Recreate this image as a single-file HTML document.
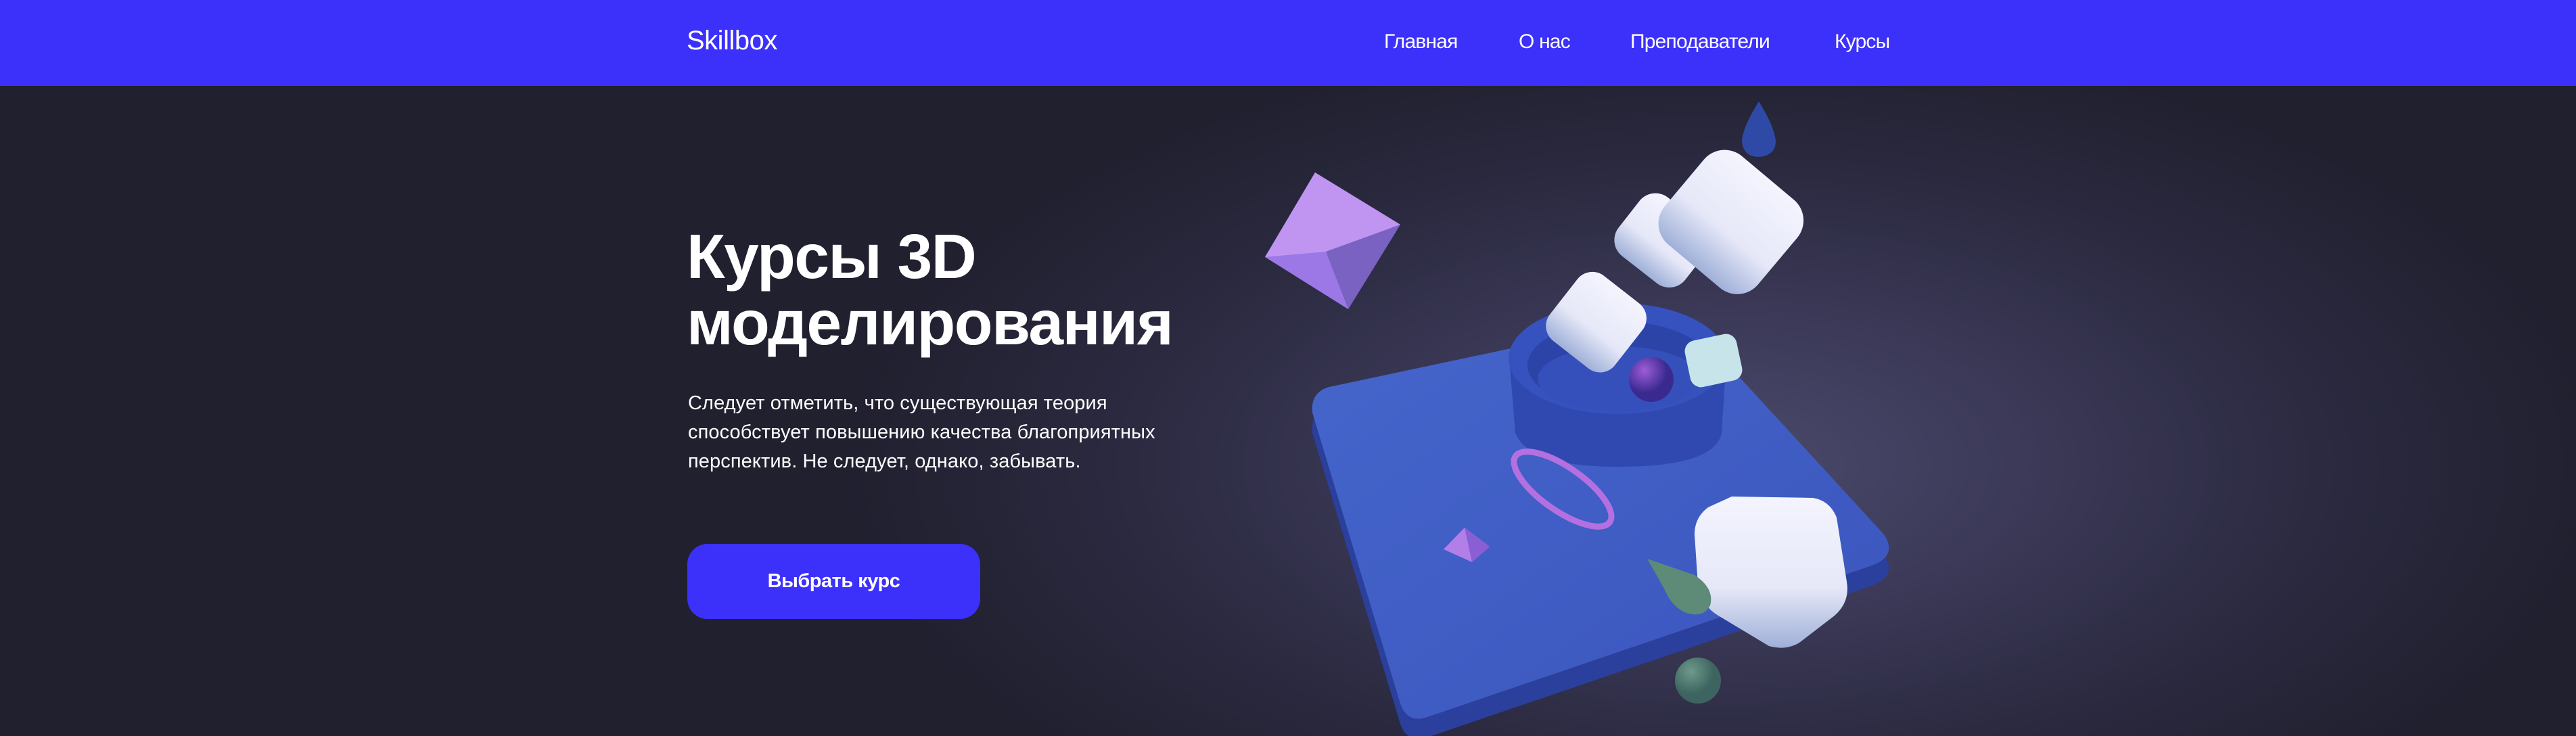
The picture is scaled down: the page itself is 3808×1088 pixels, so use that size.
<!DOCTYPE html>
<html><head><meta charset="utf-8"><style>
*{margin:0;padding:0;box-sizing:border-box}
body{width:3808px;height:1088px;overflow:hidden;background:#21202f;font-family:"Liberation Sans",Arial,sans-serif;position:relative}
.hdr{position:absolute;left:0;top:0;width:3808px;height:127px;background:#3c30fb}
.logo{position:absolute;left:1015px;top:38px;font-size:40px;color:#fff;font-weight:normal;letter-spacing:-0.5px}
.nav a{position:absolute;top:45px;font-size:30px;color:#fff;text-decoration:none;letter-spacing:-0.8px}
.bg{position:absolute;left:0;top:127px;width:3808px;height:961px;background:radial-gradient(ellipse 1300px 640px at 2550px 560px,#4c4a6c 0%,#3b3957 35%,#2a293f 70%,#21202f 100%)}
h1{position:absolute;left:1015px;top:330px;font-size:93px;line-height:98px;color:#fff;font-weight:bold;letter-spacing:-1.6px}
p{position:absolute;left:1017px;top:575px;width:900px;font-size:29px;line-height:43px;color:#fff;letter-spacing:0.1px;white-space:nowrap}
.btn{position:absolute;left:1016px;top:804px;width:433px;height:111px;border-radius:30px;background:#3c30fb;color:#fff;font-weight:bold;font-size:29px;text-align:center;line-height:111px;letter-spacing:-0.5px}
svg{position:absolute;left:0;top:0}
</style></head><body>
<div class="bg"></div>
<div class="hdr"></div>
<div class="logo">Skillbox</div>
<div class="nav"><a style="left:2046px">Главная</a><a style="left:2245px">О нас</a><a style="left:2410px">Преподаватели</a><a style="left:2712px">Курсы</a></div>
<h1>Курсы 3D<br>моделирования</h1>
<p>Следует отметить, что существующая теория<br>способствует повышению качества благоприятных<br>перспектив. Не следует, однако, забывать.</p>
<div class="btn">Выбрать курс</div>
<svg width="3808" height="1088" viewBox="0 0 3808 1088">
<defs>
<linearGradient id="pl" x1="0" y1="0" x2="1" y2="1"><stop offset="0" stop-color="#4566cc"/><stop offset="1" stop-color="#3b55bd"/></linearGradient>
<linearGradient id="cu" x1="0" y1="0" x2="0" y2="1"><stop offset="0" stop-color="#f4f4fe"/><stop offset="0.6" stop-color="#e6e8f8"/><stop offset="1" stop-color="#9fb0d8"/></linearGradient>
<radialGradient id="sp" cx="0.35" cy="0.3"><stop offset="0" stop-color="#9e5cd8"/><stop offset="1" stop-color="#3a2a90"/></radialGradient>
<radialGradient id="gs" cx="0.35" cy="0.3"><stop offset="0" stop-color="#6d9a8a"/><stop offset="1" stop-color="#3d6460"/></radialGradient>
</defs>
<path d="M1965 602 Q1937 610 1940 640 L2070 1070 Q2080 1100 2110 1090 L2770 865 Q2805 850 2785 820 L2500 510 Q2480 492 2455 498 Z" fill="#2b3f9c"/>
<path d="M1965 572 Q1937 580 1940 610 L2070 1040 Q2080 1070 2110 1060 L2770 835 Q2805 820 2785 790 L2500 480 Q2480 462 2455 468 Z" fill="url(#pl)"/>
<path d="M2231 530 L2240 640 Q2260 690 2391 690 Q2535 690 2545 640 L2552 530 Z" fill="#3049b0"/>
<ellipse cx="2391" cy="530" rx="161" ry="82" fill="#3552bf"/>
<ellipse cx="2393" cy="540" rx="135" ry="65" fill="#2c44a8"/>
<ellipse cx="2393" cy="560" rx="120" ry="48" fill="#3550bb"/>
<polygon points="1944,255 2070,332 1993,457 1870,380" fill="#9b78e6"/>
<polygon points="1944,255 2070,332 1960,372 1870,380" fill="#c095f2"/>
<polygon points="1960,372 2070,332 1993,457" fill="#7a62c2"/>
<rect x="2395" y="300" width="125" height="110" rx="30" fill="url(#cu)" transform="rotate(38 2457 355)"/>
<rect x="2470" y="240" width="180" height="170" rx="40" fill="url(#cu)" transform="rotate(40 2555 325)"/>
<path d="M2600 150 Q2575 190 2575 210 Q2578 232 2600 232 Q2625 230 2625 208 Q2622 185 2600 150 Z" fill="#2f4aa6"/>
<rect x="2298" y="415" width="122" height="122" rx="28" fill="url(#cu)" transform="rotate(38 2359 477)"/>
<circle cx="2441" cy="561" r="33" fill="url(#sp)"/>
<rect x="2494" y="498" width="78" height="70" rx="16" fill="#c6e4ea" transform="rotate(-12 2533 533)"/>
<ellipse cx="2310" cy="723" rx="85" ry="32" fill="none" stroke="#b470e0" stroke-width="9" transform="rotate(35 2310 723)"/>
<polygon points="2165,780 2202,808 2176,831 2134,812" fill="#b27ee8"/>
<polygon points="2165,780 2202,808 2176,831" fill="#8b5fd4"/>
<path d="M2560 734 L2680 736 Q2705 740 2715 765 L2730 860 Q2735 890 2712 910 L2660 950 Q2640 962 2615 955 L2540 910 Q2515 895 2510 865 L2505 790 Q2505 765 2525 750 Z" fill="url(#cu)"/>
<path d="M2435 826 L2505 850 Q2535 870 2528 895 Q2518 915 2490 905 Q2470 895 2460 870 Z" fill="#5e8a78"/>
<circle cx="2510" cy="1006" r="34" fill="url(#gs)"/>
</svg>
</body></html>
